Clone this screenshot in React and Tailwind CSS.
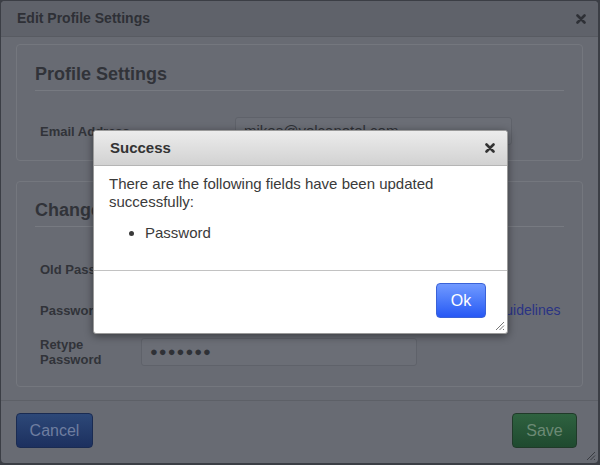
function CloseIcon({ color }) {
  return (
    <svg width="10" height="10" viewBox="0 0 10 10">
      <path d="M1.5 1.5 L8.5 8.5 M8.5 1.5 L1.5 8.5" stroke={color} strokeWidth="2.6" strokeLinecap="round" />
    </svg>
  )
}

function Grip({ color }) {
  return (
    <svg width="10" height="10" viewBox="0 0 10 10">
      <path d="M9 1 L1 9 M9 4.5 L4.5 9 M9 8 L8 9" stroke={color} strokeWidth="1" />
    </svg>
  )
}

function Field({ label, children, labelWidth }) {
  return (
    <div className="flex items-center whitespace-nowrap pl-[5px]">
      <div className={`${labelWidth} shrink-0 text-[13px] font-bold leading-[15px] text-[#313339]`}>{label}</div>
      {children}
    </div>
  )
}

function DimInput({ width, value, dots }) {
  return (
    <div className={`${width} h-[28px] shrink-0 rounded-[3px] border border-[#5f626a] bg-[#6b6e76] px-[8px] flex items-center overflow-hidden`}>
      {dots ? (
        <span className="text-[13px] leading-[14px] tracking-[1px] text-[#2f3136]">●●●●●●●</span>
      ) : (
        <span className="text-[15px] leading-[18px] text-[#2f3136]">{value}</span>
      )}
    </div>
  )
}

export default function App() {
  return (
    <div className="relative w-[600px] h-[465px] bg-[#3b3e45] pt-px pl-px pr-[2px] pb-[2px] font-['Liberation_Sans',Arial,sans-serif]">
      <div className="flex h-full flex-col rounded-[4px] bg-[#686b73]">
        <div className="flex h-[36px] items-center justify-between rounded-t-[4px] border-b border-[#585b62] bg-[#5f626a] pl-[16px] pr-[12px]">
          <span className="text-[14px] font-bold text-[#2e3036]">Edit Profile Settings</span>
          <CloseIcon color="#2e3036" />
        </div>

        <div className="flex flex-1 flex-col gap-[20px] px-[15px] pt-[7px]">
          <div className="h-[117px] rounded-[4px] border border-[#74777e] px-[18px]">
            <div className="flex h-[46px] items-end border-b border-[#777a81] pb-[6px]">
              <span className="text-[18px] font-bold leading-[20px] text-[#313339]">Profile Settings</span>
            </div>
            <div className="mt-[26px]">
              <Field label="Email Address" labelWidth="w-[195px]">
                <DimInput width="w-[277px]" value="mikes@volcanotel.com" />
              </Field>
            </div>
          </div>

          <div className="h-[206px] rounded-[4px] border border-[#74777e] px-[18px]">
            <div className="flex h-[45px] items-end border-b border-[#777a81] pb-[6px]">
              <span className="text-[18px] font-bold leading-[20px] text-[#313339]">Change Password</span>
            </div>
            <div className="mt-[28px] flex flex-col gap-[13px]">
              <Field label="Old Password" labelWidth="w-[101px]">
                <DimInput width="w-[276px]" dots />
              </Field>
              <Field label="Password" labelWidth="w-[101px]">
                <DimInput width="w-[276px]" dots />
                <span className="ml-[12px] text-[14px] leading-[18px] text-[#2a3384]">Password Guidelines</span>
              </Field>
              <Field label={<>Retype<br />Password</>} labelWidth="w-[101px]">
                <DimInput width="w-[276px]" dots />
              </Field>
            </div>
          </div>
        </div>

        <div className="relative flex h-[63px] items-start justify-between border-t border-[#5d6067] pl-[15px] pr-[21px] pt-[12px]">
          <button className="h-[35px] w-[77px] rounded-[4px] border border-[#1a2b52] bg-gradient-to-b from-[#2d4878] to-[#1c305f] text-[16px] text-[#6f7ea0]">
            Cancel
          </button>
          <button className="h-[35px] w-[65px] rounded-[4px] border border-[#203a29] bg-gradient-to-b from-[#2f6240] to-[#1f4a2f] text-[16px] text-[#6c8a75]">
            Save
          </button>
          <div className="absolute bottom-[2px] right-[2px]">
            <Grip color="#3a3c42" />
          </div>
        </div>
      </div>

      <div className="absolute left-[93px] top-[130px] flex h-[204px] w-[415px] flex-col rounded-[3px] border border-[#9a9a9a] bg-white shadow-[0_2px_8px_rgba(0,0,0,0.45)]">
        <div className="flex h-[35px] items-center justify-between rounded-t-[3px] border-b border-[#b5b5b5] bg-gradient-to-b from-[#ececec] to-[#d2d2d2] pl-[16px] pr-[12px]">
          <span className="text-[15px] font-bold text-[#333]">Success</span>
          <CloseIcon color="#333" />
        </div>
        <div className="h-[105px] border-b border-[#c2c2c2] pl-[15px] pr-[10px] pt-[9px] text-[15px] leading-[18px] text-[#3a3a3a]">
          <p>There are the following fields have been updated successfully:</p>
          <ul className="mt-[13px] pl-[36px] list-disc">
            <li>Password</li>
          </ul>
        </div>
        <div className="relative flex flex-1 items-start justify-end pr-[21px] pt-[12px]">
          <button className="h-[35px] w-[50px] rounded-[4px] border border-[#3a62d8] bg-gradient-to-b from-[#7199ff] to-[#2757f4] text-[16px] text-white">
            Ok
          </button>
          <div className="absolute bottom-[2px] right-[2px]">
            <Grip color="#777" />
          </div>
        </div>
      </div>
    </div>
  )
}
